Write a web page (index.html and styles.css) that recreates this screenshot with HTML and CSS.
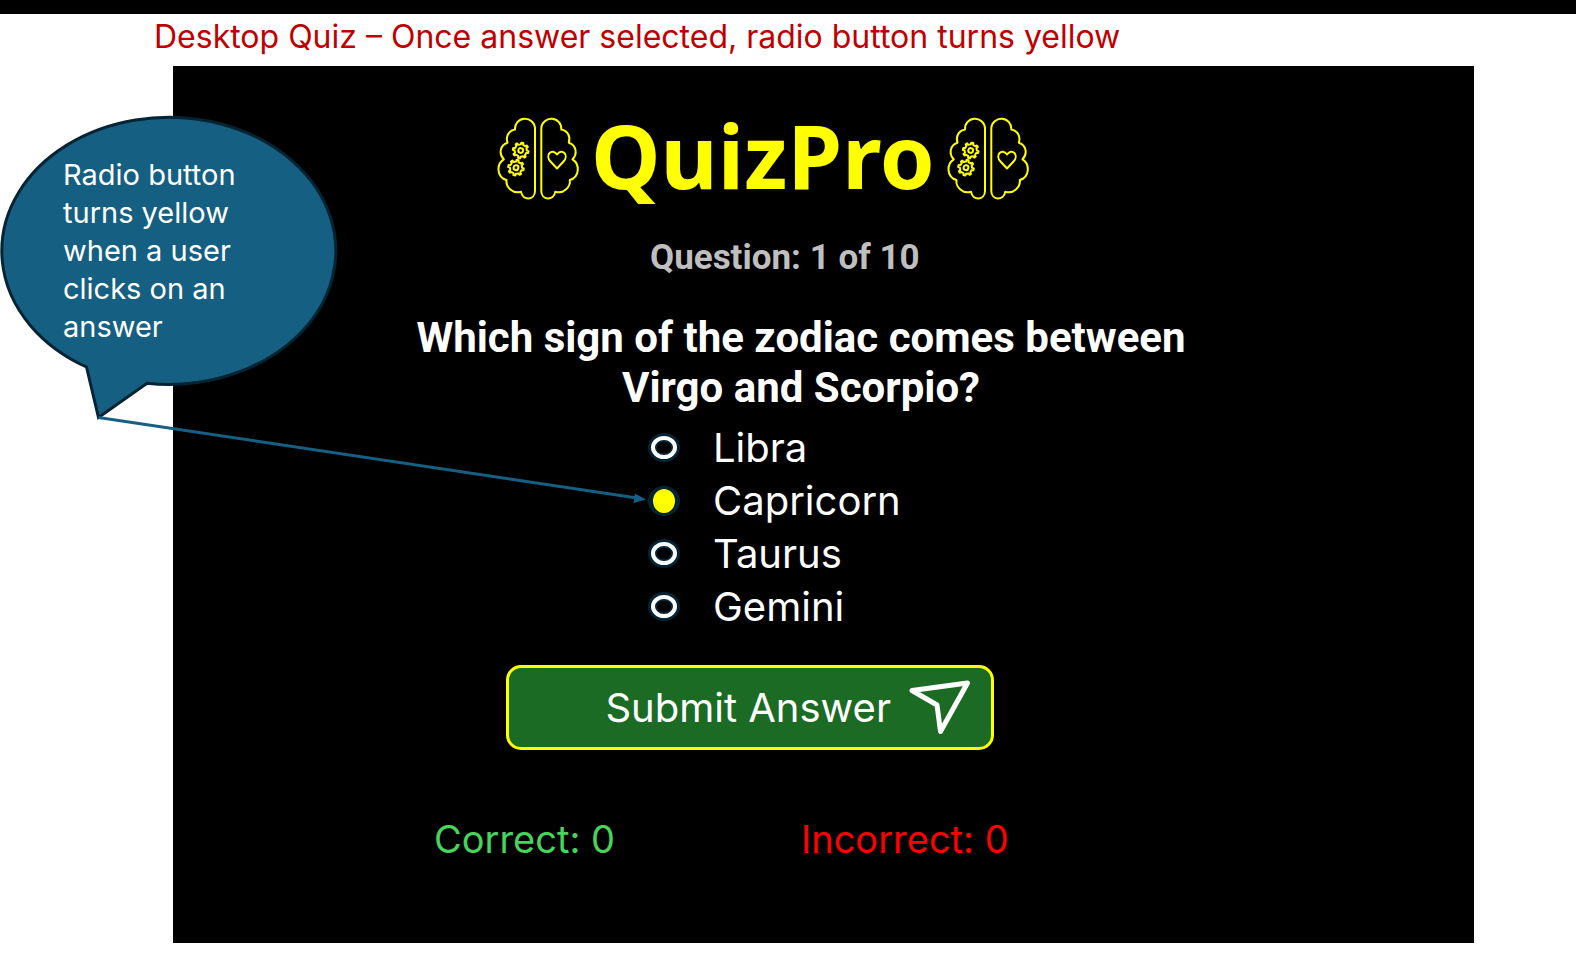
FILE: index.html
```html
<!DOCTYPE html>
<html lang="en">
<head>
<meta charset="utf-8">
<title>QuizPro</title>
<link rel="stylesheet" href="styles.css">
</head>
<body>
<svg class="defs" width="0" height="0" aria-hidden="true">
  <defs>
    <g id="gear">
      <path d="M-1.2 -6 L-1 -7.800 H1 L1.2 -6 L3.5 -5.1 L5 -6.2 L6.2 -5 L5.1 -3.5 L6 -1.2 L7.800 -1 V1 L6 1.2 L5.1 3.5 L6.2 5 L5 6.2 L3.5 5.1 L1.2 6 L1 7.800 H-1 L-1.2 6 L-3.5 5.1 L-5 6.2 L-6.2 5 L-5.1 3.5 L-6 1.2 L-7.800 1 V-1 L-6 -1.2 L-5.1 -3.5 L-6.2 -5 L-5 -6.2 L-3.5 -5.1 Z"/>
      <circle r="2.4"/>
    </g>
    <path id="lobe" d="M39 12 A10 10 0 0 0 19 13.5 C12.500 14.500 9.500 21 11.5 26.7 C4 29 2.500 38 7.8 43.3 C0.2 48 0.5 61 10.5 64 C9.500 71 17 78.500 25 75.700 C26.500 85 39 84.500 39 75 Z"/>
    <g id="brain">
      <use href="#lobe"/>
      <use href="#lobe" transform="translate(84.300 0) scale(-1 1)"/>
      <use href="#gear" transform="translate(24.700 34.500) rotate(12)"/>
      <use href="#gear" transform="translate(20 51.700) rotate(12)"/>
      <path d="M61 52.500 L54.500 45.500 C48.500 39 56 31.500 61 38.500 C66 31.500 73.500 39 67.500 45.500 Z"/>
    </g>
  </defs>
</svg>
<header class="caption">
  <h1 class="caption-text">Desktop Quiz – Once answer selected, radio button turns yellow</h1>
</header>
<main class="panel">
  <div class="brand">
    <svg class="brain" viewBox="0 0 84 84" aria-hidden="true"><use href="#brain"/></svg>
    <h2 class="brand-name">QuizPro</h2>
    <svg class="brain" viewBox="0 0 84 84" aria-hidden="true"><use href="#brain"/></svg>
  </div>
  <p class="counter">Question: 1 of 10</p>
  <form class="quiz">
    <h3 class="question" id="question">Which sign of the zodiac comes between Virgo and Scorpio?</h3>
    <fieldset class="answers" aria-labelledby="question">
      <label class="answer"><input class="radio" type="radio" name="answer" value="libra">Libra</label>
      <label class="answer"><input class="radio" type="radio" name="answer" value="capricorn" checked>Capricorn</label>
      <label class="answer"><input class="radio" type="radio" name="answer" value="taurus">Taurus</label>
      <label class="answer"><input class="radio" type="radio" name="answer" value="gemini">Gemini</label>
    </fieldset>
    <button class="submit" type="button">Submit Answer
      <svg class="send" viewBox="0 0 62 56" aria-hidden="true"><path d="M3 10.500 L58.500 3 L31.500 51.500 L28 25 Z"/></svg>
    </button>
  </form>
  <div class="scores">
    <p class="score correct">Correct: 0</p>
    <p class="score incorrect">Incorrect: 0</p>
  </div>
</main>
<aside class="callout">
  <svg class="callout-shape" viewBox="0 0 660 520" aria-hidden="true">
    <path class="bubble" d="M86.500 367 A167 133.500 0 1 1 147 383.200 L98.500 417.500 Z"/>
    <path class="line" d="M98.500 417.500 L637 498"/>
    <path class="head" d="M646 499.500 L635 493.500 L633.500 503 Z"/>
  </svg>
  <p class="callout-text">Radio button turns yellow when a user clicks on an answer</p>
</aside>
</body>
</html>
```
FILE: styles.css
```css
* {
  box-sizing: border-box;
}

body {
  margin: 0;
  position: relative;
  background: #fff;
  font-family: Inter, "Liberation Sans", sans-serif;
  color: #fff;
}

h1, h2, p {
  margin: 0;
  font-weight: 400;
}

.defs {
  position: absolute;
}

.caption {
  border-top: 14px solid #000;
  padding: 0 0 6px 154px;
}

.caption-text {
  font-size: 32px;
  line-height: 46px;
  color: #c00000;
}

.panel {
  margin: 0 102px 10px 173px;
  padding: 50px 0 78px;
  background: #000;
}

.brand {
  display: flex;
  align-items: flex-start;
  gap: 11px;
  margin-left: 323px;
}

.brain {
  flex: none;
  width: 84px;
  height: 84px;
  fill: none;
  stroke: #ff0;
  stroke-width: 2;
  stroke-linejoin: round;
}

.brand-name {
  font-family: "Noto Sans", sans-serif;
  font-size: 88px;
  font-weight: 700;
  line-height: 78px;
  color: #ff0;
}

.counter {
  margin: 38px 0 0 477px;
  font-family: Roboto, sans-serif;
  font-size: 35px;
  font-weight: 700;
  line-height: 40px;
  color: #bfbfbf;
}

.question {
  width: 800px;
  margin: 35px 0 8px 228px;
  font-family: Roboto, sans-serif;
  font-size: 42px;
  font-weight: 700;
  line-height: 50px;
  text-align: center;
}

.answers {
  margin: 0;
  padding: 0;
  border: 0;
}

.answer {
  display: flex;
  align-items: center;
  gap: 33px;
  margin-left: 475px;
  font-size: 40px;
  line-height: 53px;
}

.radio {
  appearance: none;
  display: grid;
  width: 32px;
  height: 29px;
  margin: 0;
  border: 3px solid #042433;
  border-radius: 50%;
  background: #fff;
}

.radio::before {
  content: "";
  margin: 4px;
  border: 2px solid #042433;
  border-radius: 50%;
  background: #000;
}

.radio:checked {
  height: 30px;
  border-width: 3px 5px;
  background: #ff0;
}

.radio:checked::before {
  content: none;
}

.submit {
  display: flex;
  align-items: center;
  justify-content: flex-end;
  gap: 18px;
  width: 488px;
  height: 85px;
  margin: 32px 0 0 333px;
  padding: 0 20px;
  border: 3px solid #ff0;
  border-radius: 15px;
  background: #1b6b24;
  color: #fff;
  font: inherit;
  font-size: 40px;
}

.send {
  width: 62px;
  height: 56px;
  fill: none;
  stroke: #fff;
  stroke-width: 5;
  stroke-linejoin: round;
}

.scores {
  display: flex;
  margin: 64px 0 0 261px;
  padding-bottom: 1px;
  font-size: 38px;
  line-height: 50px;
}

.score {
  width: 367px;
}

.correct {
  color: #47d45a;
}

.incorrect {
  color: #f00;
}

.callout {
  position: absolute;
  top: 0;
  left: 0;
  pointer-events: none;
}

.callout-shape {
  display: block;
  width: 660px;
  height: 520px;
}

.bubble {
  fill: #156082;
  stroke: #042433;
  stroke-width: 3;
}

.line {
  fill: none;
  stroke: #156082;
  stroke-width: 3;
}

.head {
  fill: #156082;
}

.callout-text {
  position: absolute;
  top: 156px;
  left: 63px;
  width: 200px;
  font-size: 29px;
  line-height: 38px;
}
```
